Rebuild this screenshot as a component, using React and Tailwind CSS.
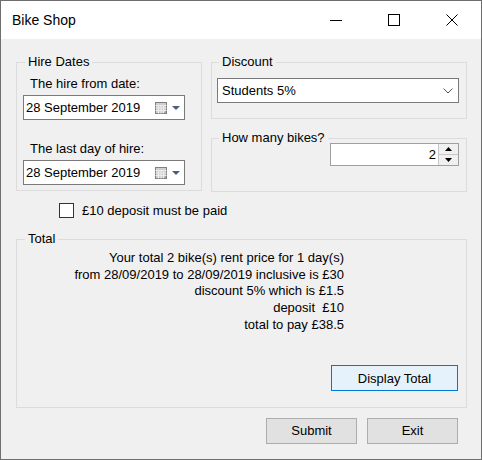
import React from 'react'

function CalendarIcon() {
  return (
    <svg width="12" height="12" viewBox="0 0 12 12">
      <rect x="0.5" y="0.5" width="11" height="11" fill="#cfcfcf" stroke="#7f7f7f" />
      <path d="M0.5 3.5h11M0.5 6h11M0.5 8.5h11M3.5 3.5v8M6 3.5v8M8.5 3.5v8" stroke="#ececec" strokeWidth="1" />
      <path d="M9 11.5L11.5 9" stroke="#7f7f7f" />
    </svg>
  )
}

function DatePicker({ value }) {
  return (
    <div className="flex h-[25px] w-[162px] items-center border border-[#7a7a7a] bg-white pl-[2px]">
      <span className="flex-1 whitespace-nowrap">{value}</span>
      <CalendarIcon />
      <svg className="ml-[5px] mr-[4px]" width="8" height="4" viewBox="0 0 8 4">
        <path d="M0 0h8L4 4z" fill="#4c5e7c" />
      </svg>
    </div>
  )
}

function Legend({ children, className = 'ml-[8px]' }) {
  return <legend className={`${className} px-[3px] leading-[16px]`}>{children}</legend>
}

export default function App() {
  return (
    <div
      className="flex h-[460px] w-[482px] flex-col border border-[#6f6f6f] bg-[#f0f0f0] text-[13px] text-black"
      style={{ fontFamily: '"Liberation Sans", Arial, sans-serif' }}
    >
      {/* Title bar */}
      <div className="flex h-[38px] shrink-0 items-center bg-white">
        <span className="flex-1 pl-[11px] text-[14px]">Bike Shop</span>
        <div className="flex h-full w-[58px] items-center justify-center">
          <svg width="12" height="12" viewBox="0 0 12 12">
            <path d="M0 6.5h12" stroke="#000" strokeWidth="1" />
          </svg>
        </div>
        <div className="flex h-full w-[58px] items-center justify-center">
          <svg width="12" height="12" viewBox="0 0 12 12">
            <rect x="0.5" y="0.5" width="11" height="11" fill="none" stroke="#000" />
          </svg>
        </div>
        <div className="flex h-full w-[58px] items-center justify-center">
          <svg width="12" height="12" viewBox="0 0 12 12">
            <path d="M0.5 0.5l11 11M11.5 0.5l-11 11" stroke="#000" strokeWidth="1" />
          </svg>
        </div>
      </div>

      {/* Form body */}
      <div className="flex flex-1 flex-col pl-[15px] pt-[15px]">
        <div className="flex gap-[9px]">
          <fieldset className="h-[137px] w-[186px] border border-[#dcdcdc] pl-[6px]">
            <Legend className="ml-[2px]">Hire Dates</Legend>
            <div className="ml-[7px] mt-[6px] leading-[16px]">The hire from date:</div>
            <div className="mt-[3px]">
              <DatePicker value="28 September 2019" />
            </div>
            <div className="ml-[7px] mt-[21px] leading-[16px]">The last day of hire:</div>
            <div className="mt-[3px]">
              <DatePicker value="28 September 2019" />
            </div>
          </fieldset>

          <div className="flex flex-col gap-[11px]">
            <fieldset className="h-[65px] w-[256px] border border-[#dcdcdc] pl-[5px]">
              <Legend className="ml-[2px]">Discount</Legend>
              <div className="mt-[8px] flex h-[25px] w-[242px] items-center border border-[#7a7a7a] bg-white pl-[4px] pr-[5px]">
                <span className="flex-1">Students 5%</span>
                <svg width="10" height="6" viewBox="0 0 10 6">
                  <path d="M0.5 0.5L5 5l4.5-4.5" fill="none" stroke="#555" strokeWidth="1" />
                </svg>
              </div>
            </fieldset>

            <fieldset className="flex h-[62px] w-[256px] flex-col border border-[#dcdcdc] pr-[7px]">
              <Legend className="ml-[7px]">How many bikes?</Legend>
              <div className="mt-[-3px] flex justify-end">
                <div className="flex h-[23px] w-[129px] border border-[#a0a0a0] bg-white">
                  <div className="flex flex-1 items-center justify-end pr-[2px]">2</div>
                  <div className="flex w-[20px] flex-col border-l border-[#c8c8c8]">
                    <div className="flex flex-1 items-center justify-center border-b border-[#c8c8c8] bg-[#f0f0f0]">
                      <svg width="7" height="4" viewBox="0 0 7 4">
                        <path d="M0 4h7L3.5 0z" fill="#000" />
                      </svg>
                    </div>
                    <div className="flex flex-1 items-center justify-center bg-[#f0f0f0]">
                      <svg width="7" height="4" viewBox="0 0 7 4">
                        <path d="M0 0h7L3.5 4z" fill="#000" />
                      </svg>
                    </div>
                  </div>
                </div>
              </div>
            </fieldset>
          </div>
        </div>

        {/* Deposit checkbox */}
        <label className="ml-[43px] mt-[11px] flex h-[15px] items-center gap-[8px]">
          <span className="h-[15px] w-[15px] border border-[#333] bg-white" />
          <span>£10 deposit must be paid</span>
        </label>

        {/* Total */}
        <fieldset className="mt-[13px] h-[177px] w-[451px] border border-[#dcdcdc]">
          <Legend>Total</Legend>
          <div className="mt-[3px] flex flex-col items-end pr-[122px] leading-[16.67px]">
            <div>Your total 2 bike(s) rent price for 1 day(s)</div>
            <div>from 28/09/2019 to 28/09/2019 inclusive is £30</div>
            <div>discount 5% which is £1.5</div>
            <div className="whitespace-pre">deposit  £10</div>
            <div>total to pay £38.5</div>
          </div>
          <div className="mt-[32px] flex justify-end pr-[8px]">
            <button className="h-[26px] w-[127px] border border-[#0078d7] bg-[#e5f1fb]">Display Total</button>
          </div>
        </fieldset>

        <div className="mt-[10px] flex w-[442px] justify-end gap-[10px]">
          <button className="h-[26px] w-[91px] border border-[#adadad] bg-[#e1e1e1]">Submit</button>
          <button className="h-[26px] w-[91px] border border-[#adadad] bg-[#e1e1e1]">Exit</button>
        </div>
      </div>
    </div>
  )
}
